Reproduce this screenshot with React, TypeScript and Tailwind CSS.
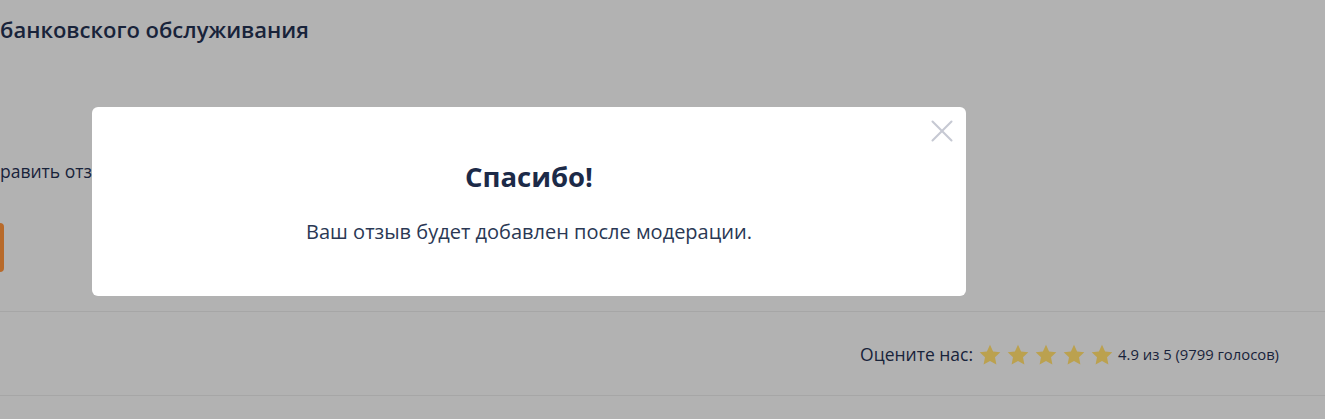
import { X } from "lucide-react";

function Star() {
    return (
        <svg viewBox="0 0 24 24" className="w-[24px] h-[24px]" fill="#bba14f">
            <path d="M12 1.8l3.1 6.6 7.2.9-5.3 5 1.4 7.1L12 17.9l-6.4 3.5 1.4-7.1-5.3-5 7.2-.9z" />
        </svg>
    );
}

export default function App() {
    return (
        <div
            className="relative min-h-screen h-[419px] overflow-hidden bg-[#b2b2b2] text-[#18233a]"
            style={{ fontFamily: '"Open Sans", "Noto Sans", sans-serif' }}
        >
            {/* page behind the dialog */}
            <div className="pt-[14px]">
                <h1 className="text-[22px] font-semibold leading-[30px]">
                    банковского обслуживания
                </h1>
                <p className="mt-[114px] text-[17.5px] leading-[26px]">равить отзыв</p>
                <div className="mt-[39px] w-[4px] h-[49px] rounded-r-[4px] bg-[#b86a2a]" />
            </div>

            <div className="mt-[39px] border-t border-[#a6a6a6]">
                <div className="h-[83px] flex items-center justify-end pr-[46px] pt-[2px]">
                    <span className="text-[17.5px]">Оцените нас:</span>
                    <div className="flex items-center gap-[4px] ml-[5px] mr-[4px]">
                        <Star />
                        <Star />
                        <Star />
                        <Star />
                        <Star />
                    </div>
                    <span className="text-[14.8px]">4.9 из 5 (9799 голосов)</span>
                </div>
            </div>
            <div className="border-t border-[#a6a6a6]" />

            {/* dialog */}
            <div className="absolute left-[92px] top-[107px] w-[874px] h-[189px] bg-white rounded-[6px] flex flex-col items-center">
                <button className="absolute right-[5px] top-[5px] text-[#c6c9d3]">
                    <X className="w-[38px] h-[38px]" strokeWidth={1.3} />
                </button>
                <h2 className="mt-[51px] text-[27.5px] font-bold leading-[38px] text-[#1c2a48]">
                    Спасибо!
                </h2>
                <p className="mt-[22px] text-[20px] leading-[28px] text-[#2a3854]">
                    Ваш отзыв будет добавлен после модерации.
                </p>
            </div>
        </div>
    );
}
